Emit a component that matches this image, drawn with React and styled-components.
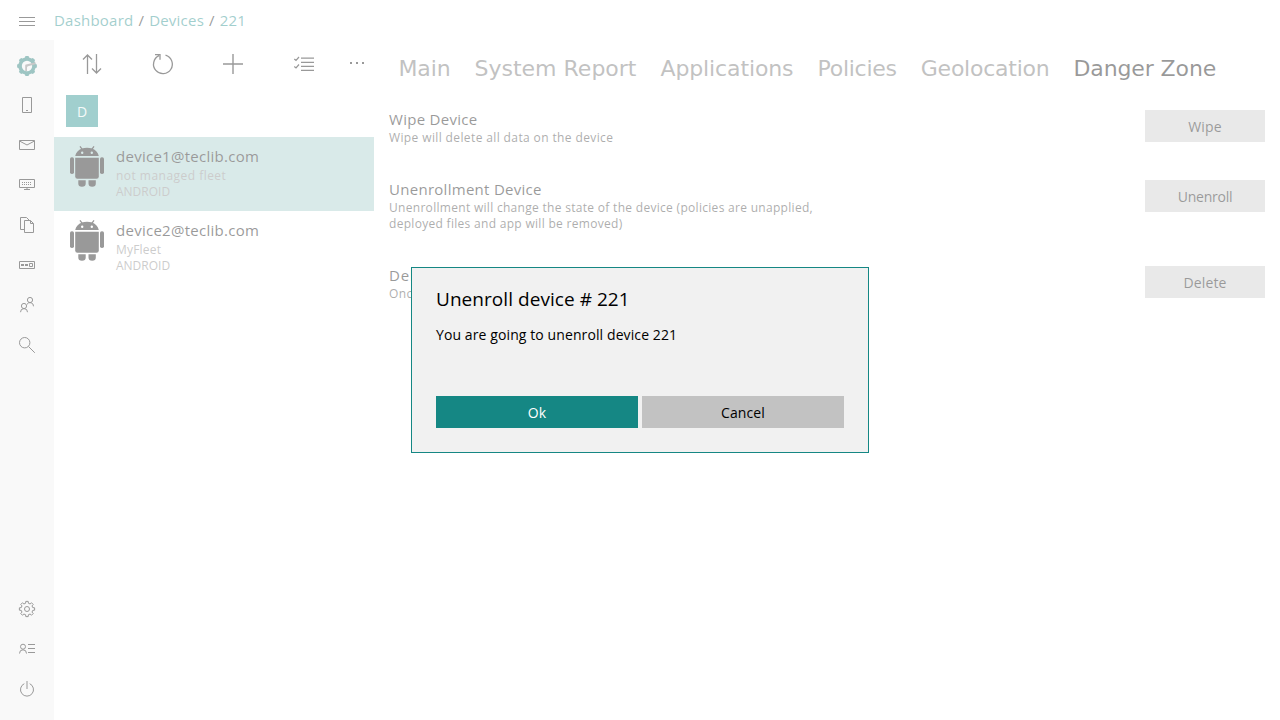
import React from "react";
import styled, { createGlobalStyle } from "styled-components";

const TEAL = "#158784";

const GlobalStyle = createGlobalStyle`
  *, *::before, *::after { box-sizing: border-box; }
  body {
    margin: 0;
    background: #fff;
    color: #000;
    font-family: "Open Sans", "Noto Sans", sans-serif;
    overflow: hidden;
  }
`;

const Page = styled.div`
  height: 100vh;
  display: flex;
  flex-direction: column;
`;

const Header = styled.header`
  height: 40px;
  flex: none;
  display: flex;
  align-items: center;
`;

const MenuButton = styled.div`
  width: 54px;
  display: flex;
  justify-content: center;
  padding-top: 2px;
`;

const Breadcrumb = styled.nav`
  display: flex;
  gap: 5px;
  font-size: 15px;
  line-height: 20px;
  letter-spacing: 0.22px;
`;

const Crumb = styled.a`
  color: ${TEAL};
`;

const Body = styled.div`
  flex: 1;
  display: flex;
  min-height: 0;
`;

const Sidebar = styled.aside`
  width: 54px;
  background: #f0f0f0;
  display: flex;
  flex-direction: column;
  justify-content: space-between;
  padding: 5px 0 11px;
`;

const NavGroup = styled.div`
  display: flex;
  flex-direction: column;
`;

const NavItem = styled.div`
  height: 40px;
  display: flex;
  align-items: center;
  justify-content: center;
`;

const LogoItem = styled(NavItem)`
  padding-top: 2px;
`;

const Icon = styled.svg`
  display: block;
  flex: none;
  overflow: visible;
  fill: none;
  stroke: ${(p) => p.$color || "#000"};
  stroke-width: ${(p) => p.$weight || 1};
`;

const ListPane = styled.section`
  width: 320px;
  flex: none;
`;

const Toolbar = styled.div`
  height: 48px;
  padding-left: 28px;
  display: flex;
  align-items: center;
`;

const Tool = styled.div`
  margin-right: ${(p) => p.$gap || 0}px;
  padding-bottom: ${(p) => p.$lift || 0}px;
`;

const GroupHeader = styled.div`
  height: 49px;
  padding: 7px 12px 0;
`;

const GroupTile = styled.div`
  width: 32px;
  height: 32px;
  background: ${TEAL};
  color: #e6f2f1;
  font-size: 14px;
  line-height: 34px;
  text-align: center;
`;

const Device = styled.article`
  height: 74px;
  padding: 9px 16px 0;
  display: flex;
  gap: 12px;
  background: ${(p) => (p.$selected ? "#a1cbc8" : "transparent")};
`;

const DeviceInfo = styled.div``;

const DeviceName = styled.div`
  margin-bottom: 2px;
  font-size: 15px;
  line-height: 20px;
  letter-spacing: 0.27px;
`;

const DeviceMeta = styled.div`
  color: #808080;
  font-size: 12px;
  line-height: 16px;
  letter-spacing: ${(p) => p.$spacing || 0}px;
`;

const Content = styled.main`
  flex: 1;
  padding: 0 15px;
`;

const Tabs = styled.nav`
  height: 69px;
  padding: 16px 9px 0 9.4px;
  display: flex;
  gap: 24px;
  font-family: "DejaVu Sans", sans-serif;
  font-size: 22px;
  line-height: 26px;
`;

const Tab = styled.div`
  color: ${(p) => (p.$active ? "#000" : "#666")};
  letter-spacing: ${(p) => p.$spacing}px;
  white-space: nowrap;
`;

const ActionRow = styled.div`
  display: flex;
  justify-content: space-between;
  align-items: flex-start;
  margin-bottom: 33px;
`;

const ActionTitle = styled.div`
  margin-bottom: 1px;
  font-size: 15px;
  line-height: 20px;
  letter-spacing: ${(p) => p.$spacing ?? 0.28}px;
`;

const ActionText = styled.div`
  width: 450px;
  color: #333;
  font-size: 12px;
  line-height: 16px;
  letter-spacing: ${(p) => p.$spacing}px;
`;

const Button = styled.button`
  width: ${(p) => p.$width}px;
  height: 32px;
  flex: none;
  padding: 2px 0 0;
  border: 0;
  background: ${(p) => (p.$primary ? TEAL : p.$plain || "#c8c8c8")};
  color: ${(p) => (p.$primary ? "#fff" : "#000")};
  font: 14px/20px "Open Sans", "Noto Sans", sans-serif;
  letter-spacing: ${(p) => p.$spacing ?? 0.1}px;
`;

const ActionButton = styled(Button)`
  margin-top: 1px;
`;

const Overlay = styled.div`
  position: absolute;
  inset: 0;
  display: flex;
  align-items: center;
  justify-content: center;
  background: rgba(255, 255, 255, 0.6);
`;

const Dialog = styled.div`
  width: 458px;
  height: 186px;
  padding: 18px 24px 24px;
  display: flex;
  flex-direction: column;
  border: 1px solid ${TEAL};
  background: #f1f1f1;
`;

const DialogTitle = styled.h2`
  margin: 0;
  font-size: 19px;
  font-weight: 400;
  line-height: 26px;
  letter-spacing: 0.05px;
`;

const DialogText = styled.p`
  margin: 13px 0 0;
  font-size: 14px;
  line-height: 20px;
  letter-spacing: 0.1px;
`;

const DialogButtons = styled.div`
  margin-top: auto;
  display: flex;
  gap: 4px;
`;

function gearPath(cx, cy, outer, inner, teeth) {
  const pts = [];
  const step = (Math.PI * 2) / teeth;
  for (let i = 0; i < teeth; i++) {
    const a = i * step - Math.PI / 2;
    [[-0.3, inner], [-0.2, outer], [0.2, outer], [0.3, inner]].forEach(([k, r]) => {
      pts.push(`${(cx + r * Math.cos(a + k * step)).toFixed(2)} ${(cy + r * Math.sin(a + k * step)).toFixed(2)}`);
    });
  }
  return `M${pts.join("L")}Z`;
}

const LogoIcon = () => (
  <Icon width="20" height="20" viewBox="0 0 20 20" $color="none">
    <path d={gearPath(10, 10, 10, 8.8, 8)} fill="#0d6f6a" />
    <circle cx="10" cy="10" r="5.2" fill="#f0f0f0" />
    <path d="M8.200 15V9.500Q8.200 8.700 9 8.500L18.500 6.300V8.300L11 10.200Q10 10.500 10 11.500V15Z" fill="#777" />
  </Icon>
);

const PhoneIcon = () => (
  <Icon width="16" height="16" viewBox="0 0 16 16">
    <path d="M3.5 .5h9v15h-9zM7 13.5h2" />
  </Icon>
);

const MailIcon = () => (
  <Icon width="16" height="16" viewBox="0 0 16 16">
    <path d="M.5 3.5h15v9H.5zM.5 4l7.5 4 7.5-4" />
  </Icon>
);

const KeyboardScreenIcon = () => (
  <Icon width="16" height="16" viewBox="0 0 16 16">
    <path d="M.5 2.5h15v8H.5zM8 11v1.500M5 12.500h6" />
    <path d="M3 5.500h10M3 7.500h10" strokeDasharray="1 1" />
  </Icon>
);

const FilesIcon = () => (
  <Icon width="16" height="16" viewBox="0 0 16 16">
    <path d="M5 12.500H1.500V.5h6l3 3M5.500 3.500h6l3 3v9h-9zM11.500 3.500v3h3" />
  </Icon>
);

const FleetIcon = () => (
  <Icon width="16" height="16" viewBox="0 0 16 16">
    <path d="M.5 4.500h15v7H.5zM10.500 6.500h3v3h-3z" />
    <path d="M2 8h3M6 8h3" strokeWidth="2" />
  </Icon>
);

const PeopleIcon = () => (
  <Icon width="16" height="16" viewBox="0 0 16 16">
    <circle cx="11" cy="3" r="2.600" />
    <circle cx="5" cy="9" r="2.600" />
    <path d="M1.500 15.200a3.500 3.600 0 0 1 7 0M8 7.300a3.500 3.500 0 0 1 6.500 2" />
  </Icon>
);

const SearchIcon = () => (
  <Icon width="16" height="16" viewBox="0 0 16 16">
    <circle cx="5.700" cy="5.700" r="5.200" />
    <path d="M9.500 9.500l6.300 6.300" />
  </Icon>
);

const GearIcon = () => (
  <Icon width="16" height="16" viewBox="0 0 16 16">
    <path d={gearPath(8, 8, 7.7, 5.9, 8)} />
    <circle cx="8" cy="8" r="2.500" />
  </Icon>
);

const AccountIcon = () => (
  <Icon width="16" height="16" viewBox="0 0 16 16">
    <circle cx="4" cy="5.700" r="2.500" />
    <path d="M.5 12.500a3.500 3.700 0 0 1 7 0M9 3.500h7M9 7.500h7M9 11.500h7" />
  </Icon>
);

const PowerIcon = () => (
  <Icon width="16" height="16" viewBox="0 0 16 16">
    <path d="M5.300 2.700a6.500 6.500 0 1 0 5.400 0M8 0v8" />
  </Icon>
);

const HamburgerIcon = () => (
  <Icon width="16" height="10" viewBox="0 0 16 10">
    <path d="M0 1.500h16M0 5.500h16M0 9.500h16" />
  </Icon>
);

const SortIcon = () => (
  <Icon width="20" height="20" viewBox="0 0 20 20" $weight="1.300">
    <path d="M5.500 20V1M1 5.500L5.500 1 10 5.500M14.500 0v19M10 14.500l4.500 4.500 4.500-4.500" />
  </Icon>
);

const RefreshIcon = () => (
  <Icon width="20" height="20" viewBox="0 0 20 20" $weight="1.300">
    <path d="M12.500 1.200A9.400 9.400 0 1 1 6 1.700M2 .7h5v5" />
  </Icon>
);

const PlusIcon = () => (
  <Icon width="20" height="20" viewBox="0 0 20 20" $weight="1.400">
    <path d="M10 0v20M0 10h20" />
  </Icon>
);

const ChecklistIcon = () => (
  <Icon width="20" height="16" viewBox="0 0 20 16" $weight="1.200">
    <path d="M7 2.200h13M7 6.300h13M7 10.300h13M7 14.300h13M.3 3l1.700 1.500 3-3.500M.3 10.500L2 12l3-3.500" />
  </Icon>
);

const MoreIcon = () => (
  <Icon width="14" height="2" viewBox="0 0 14 2" $weight="2">
    <path d="M0 1h2M6 1h2M12 1h2" />
  </Icon>
);

const AndroidIcon = () => (
  <Icon width="34" height="41" viewBox="0 0 34 41" $color="none">
    <path d="M10 .3l2.200 3M24 .3l-2.200 3" stroke="#000" strokeWidth="1.300" />
    <g fill="#000">
      <path
        d="M5.200 9.900C6 6.200 8.300 3.800 11.800 2.400Q17 1.200 22.200 2.400C25.700 3.800 28 6.200 28.800 9.900ZM12.200 5.500a1.200 1.200 0 1 0 .01 2.400 1.200 1.200 0 0 0 0-2.400ZM21.800 5.500a1.200 1.200 0 1 0 .01 2.400 1.200 1.200 0 0 0 0-2.400Z"
        fillRule="evenodd"
      />
      <path d="M5.200 11.700H28.800V30.500Q28.800 32.800 26.500 32.800H7.500Q5.200 32.800 5.200 30.500Z" />
      <rect x="0" y="11.300" width="4" height="16.800" rx="1.800" />
      <rect x="30" y="11.300" width="4" height="16.800" rx="1.800" />
      <path d="M8.300 34.200H15.700V37.500Q15.700 40.800 12 40.800T8.300 37.500ZM18.500 34.200H25.800V37.500Q25.800 40.800 22.200 40.800T18.500 37.500Z" />
    </g>
  </Icon>
);

const MAIN_NAV = [PhoneIcon, MailIcon, KeyboardScreenIcon, FilesIcon, FleetIcon, PeopleIcon, SearchIcon];
const FOOT_NAV = [GearIcon, AccountIcon, PowerIcon];
const TABS = [
  { label: "Main", spacing: -0.1 },
  { label: "System Report", spacing: 0 },
  { label: "Applications", spacing: -0.12 },
  { label: "Policies", spacing: -0.25 },
  { label: "Geolocation", spacing: -0.25 },
  { label: "Danger Zone", spacing: -0.1 },
];
const DEVICES = [
  { name: "device1@teclib.com", fleet: "not managed fleet", spacing: 0.47, os: "ANDROID" },
  { name: "device2@teclib.com", fleet: "MyFleet", spacing: 0.2, os: "ANDROID" },
];
const ACTIONS = [
  { title: "Wipe Device", text: "Wipe will delete all data on the device", spacing: 0.38, label: "Wipe" },
  {
    title: "Unenrollment Device",
    text: "Unenrollment will change the state of the device (policies are unapplied, deployed files and app will be removed)",
    spacing: 0.3,
    label: "Unenroll",
    labelSpacing: -0.25,
  },
  { title: "Delete Device", titleSpacing: 0.9, text: "Once", spacing: 0.38, label: "Delete" },
];

export default function App() {
  return (
    <>
      <GlobalStyle />
      <Page>
        <Header>
          <MenuButton><HamburgerIcon /></MenuButton>
          <Breadcrumb>
            <Crumb>Dashboard</Crumb>
            <span>/</span>
            <Crumb>Devices</Crumb>
            <span>/</span>
            <Crumb>221</Crumb>
          </Breadcrumb>
        </Header>
        <Body>
          <Sidebar>
            <NavGroup>
              <LogoItem><LogoIcon /></LogoItem>
              {MAIN_NAV.map((Glyph, i) => <NavItem key={i}><Glyph /></NavItem>)}
            </NavGroup>
            <NavGroup>{FOOT_NAV.map((Glyph, i) => <NavItem key={i}><Glyph /></NavItem>)}</NavGroup>
          </Sidebar>
          <ListPane>
            <Toolbar>
              <Tool $gap={51}><SortIcon /></Tool>
              <Tool $gap={50}><RefreshIcon /></Tool>
              <Tool $gap={51}><PlusIcon /></Tool>
              <Tool $gap={36}><ChecklistIcon /></Tool>
              <Tool $lift={2}><MoreIcon /></Tool>
            </Toolbar>
            <GroupHeader><GroupTile>D</GroupTile></GroupHeader>
            {DEVICES.map((d, i) => (
              <Device key={d.name} $selected={i === 0}>
                <AndroidIcon />
                <DeviceInfo>
                  <DeviceName>{d.name}</DeviceName>
                  <DeviceMeta $spacing={d.spacing}>{d.fleet}</DeviceMeta>
                  <DeviceMeta>{d.os}</DeviceMeta>
                </DeviceInfo>
              </Device>
            ))}
          </ListPane>
          <Content>
            <Tabs>
              {TABS.map((t) => (
                <Tab key={t.label} $spacing={t.spacing} $active={t.label === "Danger Zone"}>{t.label}</Tab>
              ))}
            </Tabs>
            {ACTIONS.map((a) => (
              <ActionRow key={a.title}>
                <div>
                  <ActionTitle $spacing={a.titleSpacing}>{a.title}</ActionTitle>
                  <ActionText $spacing={a.spacing}>{a.text}</ActionText>
                </div>
                <ActionButton $width={120} $spacing={a.labelSpacing}>{a.label}</ActionButton>
              </ActionRow>
            ))}
          </Content>
        </Body>
      </Page>
      <Overlay>
        <Dialog>
          <DialogTitle>Unenroll device # 221</DialogTitle>
          <DialogText>You are going to unenroll device 221</DialogText>
          <DialogButtons>
            <Button $primary $width={202}>Ok</Button>
            <Button $plain="#c2c2c2" $width={202}>Cancel</Button>
          </DialogButtons>
        </Dialog>
      </Overlay>
    </>
  );
}
